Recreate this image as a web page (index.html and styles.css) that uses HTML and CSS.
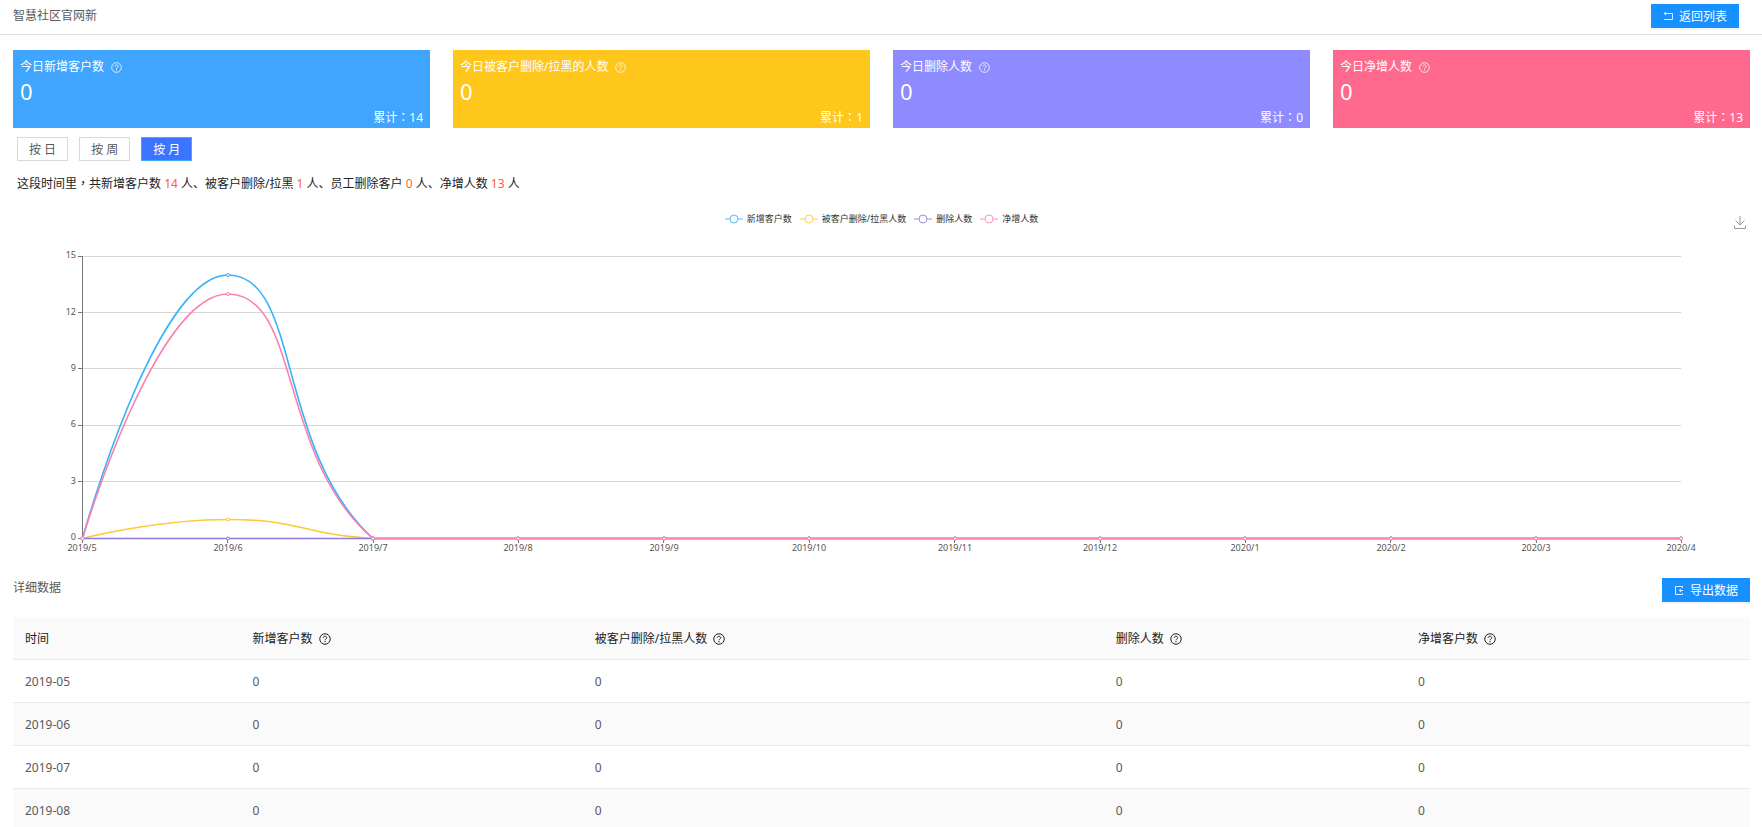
FILE: index.html
```
<!DOCTYPE html>
<html lang="zh-CN">
<head>
    <meta charset="UTF-8">
    <meta name="viewport" content="width=device-width, initial-scale=1.0">
    <title>智慧社区官网新</title>
    <link rel="stylesheet" href="styles.css">
</head>
<body>
    <!--shared icons-->
    <svg class="sprite" aria-hidden="true">
        <symbol id="icon-help" viewBox="0 0 24 24">
            <circle cx="12" cy="12" r="10.5" fill="none" stroke="currentColor" stroke-width="2"/>
            <path d="M8.5 9.8c0-2 1.5-3.3 3.5-3.3s3.5 1.3 3.5 3.1c0 2.2-3.5 2.5-3.5 5" fill="none" stroke="currentColor" stroke-width="2"/>
            <circle cx="12" cy="17.3" r="1.3" fill="currentColor"/>
        </symbol>
    </svg>

    <header class="page-header">
        <h1 class="page-title">智慧社区官网新</h1>
        <button type="button" class="btn-primary">
            <svg class="btn-icon" viewBox="0 0 12 12" fill="none" stroke="currentColor"><path d="M3 3.5h7.5v6H2"/><path d="M4 1.5v4L1.5 3.5z" fill="currentColor" stroke="none"/></svg>
            返回列表
        </button>
    </header>

    <main class="content">
        <!--today cards-->
        <section class="cards">
            <div class="card card-blue">
                <p class="card-label">今日新增客户数 <svg class="card-help"><use href="#icon-help"/></svg></p>
                <p class="card-value">0</p>
                <p class="card-total">累计<span lang="zh-TW">：</span>14</p>
            </div>
            <div class="card card-yellow">
                <p class="card-label">今日被客户删除/拉黑的人数 <svg class="card-help"><use href="#icon-help"/></svg></p>
                <p class="card-value">0</p>
                <p class="card-total">累计<span lang="zh-TW">：</span>1</p>
            </div>
            <div class="card card-purple">
                <p class="card-label">今日删除人数 <svg class="card-help"><use href="#icon-help"/></svg></p>
                <p class="card-value">0</p>
                <p class="card-total">累计<span lang="zh-TW">：</span>0</p>
            </div>
            <div class="card card-pink">
                <p class="card-label">今日净增人数 <svg class="card-help"><use href="#icon-help"/></svg></p>
                <p class="card-value">0</p>
                <p class="card-total">累计<span lang="zh-TW">：</span>13</p>
            </div>
        </section>

        <!--period-->
        <div class="periods">
            <button type="button" class="period">按 日</button>
            <button type="button" class="period">按 周</button>
            <button type="button" class="period active">按 月</button>
        </div>
        <p class="summary">这段时间里<span lang="zh-TW">，</span>共新增客户数 <em>14</em> 人、被客户删除/拉黑 <em>1</em> 人、员工删除客户 <em>0</em> 人、净增人数 <em>13</em> 人</p>

        <!--chart-->
        <section class="chart">
            <div class="chart-head">
                <ul class="legend">
                    <li class="legend-item blue"><svg class="legend-icon" viewBox="0 0 18 10"><path d="M0 5h18"/><circle cx="9" cy="5" r="4"/></svg>新增客户数</li>
                    <li class="legend-item yellow"><svg class="legend-icon" viewBox="0 0 18 10"><path d="M0 5h18"/><circle cx="9" cy="5" r="4"/></svg>被客户删除/拉黑人数</li>
                    <li class="legend-item purple"><svg class="legend-icon" viewBox="0 0 18 10"><path d="M0 5h18"/><circle cx="9" cy="5" r="4"/></svg>删除人数</li>
                    <li class="legend-item pink"><svg class="legend-icon" viewBox="0 0 18 10"><path d="M0 5h18"/><circle cx="9" cy="5" r="4"/></svg>净增人数</li>
                </ul>
                <button type="button" class="download" aria-label="保存为图片">
                    <svg viewBox="0 0 12 13" fill="none" stroke="currentColor"><path d="M6 0v9M1.5 4.5L6 9l4.5-4.5M.5 9.5v3h11v-3"/></svg>
                </button>
            </div>
            <svg class="plot" viewBox="0 0 1737 320">
                <defs>
                    <marker id="dot-blue" class="dot blue" viewBox="-3 -3 6 6" markerWidth="6" markerHeight="6" markerUnits="userSpaceOnUse"><circle r="1.5"/></marker>
                    <marker id="dot-yellow" class="dot yellow" viewBox="-3 -3 6 6" markerWidth="6" markerHeight="6" markerUnits="userSpaceOnUse"><circle r="1.5"/></marker>
                    <marker id="dot-purple" class="dot purple" viewBox="-3 -3 6 6" markerWidth="6" markerHeight="6" markerUnits="userSpaceOnUse"><circle r="1.5"/></marker>
                    <marker id="dot-pink" class="dot pink" viewBox="-3 -3 6 6" markerWidth="6" markerHeight="6" markerUnits="userSpaceOnUse"><circle r="1.5"/></marker>
                </defs>
                <path class="grid" d="M69 15.5H1668M69 71.5H1668M69 127.5H1668M69 184.5H1668M69 240.5H1668"/>
                <path class="axis" d="M69.5 15V297.5H1668M65 15.5h4M65 71.5h4M65 127.5h4M65 184.5h4M65 240.5h4M65 297.5h4"/>
                <path class="axis" d="M69.5 297v5M214.5 297v5M360.5 297v5M505.5 297v5M650.5 297v5M796.5 297v5M941.5 297v5M1087.5 297v5M1232.5 297v5M1377.5 297v5M1523.5 297v5M1668.5 297v5"/>
                <g class="axis-text axis-y">
                    <text x="63" y="17">15</text>
                    <text x="63" y="74">12</text>
                    <text x="63" y="130">9</text>
                    <text x="63" y="186">6</text>
                    <text x="63" y="243">3</text>
                    <text x="63" y="299">0</text>
                </g>
                <g class="axis-text axis-x">
                    <text x="69" y="310">2019/5</text>
                    <text x="215" y="310">2019/6</text>
                    <text x="360" y="310">2019/7</text>
                    <text x="505" y="310">2019/8</text>
                    <text x="651" y="310">2019/9</text>
                    <text x="796" y="310">2019/10</text>
                    <text x="942" y="310">2019/11</text>
                    <text x="1087" y="310">2019/12</text>
                    <text x="1232" y="310">2020/1</text>
                    <text x="1378" y="310">2020/2</text>
                    <text x="1523" y="310">2020/3</text>
                    <text x="1668" y="310">2020/4</text>
                </g>
                <path class="line blue" d="M69.5 297.5C69.5 297.5 142 34 215 34C288 34 262 208 360 297.5L505 297.5L651 297.5L796 297.5L942 297.5L1087 297.5L1232 297.5L1378 297.5L1523 297.5L1668 297.5"/>
                <path class="line yellow" d="M69.5 297.5C69.5 297.5 142 278.5 215 278.5C288 278.5 287 293 360 297.5L505 297.5L651 297.5L796 297.5L942 297.5L1087 297.5L1232 297.5L1378 297.5L1523 297.5L1668 297.5"/>
                <path class="line purple" d="M69.5 297.5L215 297.5L360 297.5L505 297.5L651 297.5L796 297.5L942 297.5L1087 297.5L1232 297.5L1378 297.5L1523 297.5L1668 297.5"/>
                <path class="line pink" d="M69.5 297.5C69.5 297.5 142 53 215 53C288 53 264 216 360 297.5L505 297.5L651 297.5L796 297.5L942 297.5L1087 297.5L1232 297.5L1378 297.5L1523 297.5L1668 297.5"/>
            </svg>
        </section>

        <!--detail table-->
        <div class="detail-head">
            <h2 class="detail-title">详细数据</h2>
            <button type="button" class="btn-primary">
                <svg class="btn-icon" viewBox="0 0 12 12" fill="none" stroke="currentColor"><path d="M9.5 4V2.5h-7v8h7V9M6 6.5h4"/><path d="M8 4.5v4l-2-2z" fill="currentColor" stroke="none"/></svg>
                导出数据
            </button>
        </div>
        <table class="detail">
            <colgroup>
                <col class="col-time">
                <col class="col-new">
                <col class="col-blocked">
                <col class="col-deleted">
                <col>
            </colgroup>
            <thead>
                <tr>
                    <th>时间</th>
                    <th>新增客户数 <svg class="th-help"><use href="#icon-help"/></svg></th>
                    <th>被客户删除/拉黑人数 <svg class="th-help"><use href="#icon-help"/></svg></th>
                    <th>删除人数 <svg class="th-help"><use href="#icon-help"/></svg></th>
                    <th>净增客户数 <svg class="th-help"><use href="#icon-help"/></svg></th>
                </tr>
            </thead>
            <tbody>
                <tr><td>2019-05</td><td>0</td><td>0</td><td>0</td><td>0</td></tr>
                <tr><td>2019-06</td><td>0</td><td>0</td><td>0</td><td>0</td></tr>
                <tr><td>2019-07</td><td>0</td><td>0</td><td>0</td><td>0</td></tr>
                <tr><td>2019-08</td><td>0</td><td>0</td><td>0</td><td>0</td></tr>
            </tbody>
        </table>
    </main>
</body>
</html>
```

FILE: styles.css
```
* {
    box-sizing: border-box;
}
body {
    margin: 0;
    height: 100vh;
    overflow: hidden;
    background-color: #fff;
    font-family: "Noto Sans", "Noto Sans CJK SC", sans-serif;
    font-size: 12px;
    line-height: 18px;
    color: #595959;
}
h1, h2, p, ul {
    margin: 0;
    padding: 0;
}
button {
    font-family: inherit;
    font-size: 12px;
    cursor: pointer;
}
/* centred full-width punctuation */
[lang="zh-TW"] {
    font-family: "Noto Sans CJK TC", sans-serif;
    line-height: 1;
}
.sprite {
    position: absolute;
    width: 0;
    height: 0;
}

/* header */
.page-header {
    display: flex;
    justify-content: space-between;
    align-items: center;
    padding: 4px 23px 6px 13px;
    border-bottom: 1px solid #e0e0e0;
}
.page-title, .detail-title {
    font-size: 12px;
    font-weight: normal;
    line-height: 20px;
}
.btn-primary {
    display: flex;
    align-items: center;
    gap: 5px;
    height: 24px;
    padding: 0 11px 1px 10px;
    border: 1px solid #1890ff;
    background-color: #1890ff;
    box-shadow: 0 2px 0 rgba(0, 0, 0, 0.04);
    color: #fff;
}
.btn-icon {
    width: 12px;
    height: 12px;
    opacity: 0.85;
}
.content {
    padding: 15px 12px 0 13px;
}

/* cards */
.cards {
    display: grid;
    grid-template-columns: repeat(4, 1fr);
    gap: 23px;
}
.card {
    padding: 8px 7px 1px;
    color: #fff;
}
.card-blue {
    background-color: #40a5ff;
}
.card-yellow {
    background-color: #ffc61c;
}
.card-purple {
    background-color: #8e8aff;
}
.card-pink {
    background-color: #ff698d;
}
.card-label {
    display: flex;
    align-items: center;
    gap: 7px;
}
.card-help {
    width: 11px;
    height: 11px;
    opacity: 0.9;
}
.card-value {
    padding-bottom: 2px;
    font-size: 22px;
    line-height: 31px;
}
.card-total {
    text-align: right;
}

/* period */
.periods {
    display: flex;
    gap: 11px;
    padding: 9px 4px 0;
}
.period {
    height: 24px;
    padding: 0 11px;
    border: 1px solid #d9d9d9;
    background-color: #fff;
    color: #595959;
}
.period.active {
    border-color: #40a9ff;
    background-color: #3b74ff;
    color: #fff;
}
.summary {
    padding: 14px 4px 0;
    color: #222;
}
.summary em {
    font-style: normal;
    color: #ff5b3d;
}

/* chart */
.blue {
    --series: #36b3fa;
}
.yellow {
    --series: #ffc933;
}
.purple {
    --series: #9377e0;
}
.pink {
    --series: #fa80b0;
}
.chart-head {
    position: relative;
    padding: 19px 0 15px;
}
.legend {
    display: flex;
    justify-content: center;
    gap: 8px;
    list-style: none;
    font-size: 9px;
    line-height: 14px;
    color: #333;
}
.legend-item {
    display: flex;
    align-items: center;
    gap: 4px;
}
.legend-icon {
    width: 18px;
    height: 10px;
    fill: #fff;
    stroke: var(--series);
    opacity: 0.85;
}
.download {
    position: absolute;
    top: 23px;
    right: 4px;
    width: 12px;
    height: 13px;
    padding: 0;
    border: none;
    background: none;
    color: #999;
}
.download svg {
    display: block;
}
.plot {
    display: block;
    width: 100%;
}
.grid {
    stroke: #d6d6d6;
}
.axis {
    fill: none;
    stroke: #777;
}
.axis-text {
    font-size: 9px;
    fill: #555;
}
.axis-y {
    text-anchor: end;
}
.axis-x {
    text-anchor: middle;
}
.line {
    fill: none;
    stroke: var(--series);
    stroke-width: 1.6;
}
.line.blue {
    marker: url(#dot-blue);
}
.line.yellow {
    marker: url(#dot-yellow);
}
.line.purple {
    marker: url(#dot-purple);
}
.line.pink {
    marker: url(#dot-pink);
}
.dot circle {
    fill: #fff;
    stroke: var(--series);
    stroke-width: 1;
}

/* detail table */
.detail-head {
    display: flex;
    justify-content: space-between;
    align-items: flex-start;
    padding: 17px 0 15px;
}
.detail {
    width: 100%;
    table-layout: fixed;
    border-collapse: separate;
    border-spacing: 0;
}
.col-time {
    width: 13.1%;
}
.col-new {
    width: 19.7%;
}
.col-blocked {
    width: 30%;
}
.col-deleted {
    width: 17.4%;
}
.detail th, .detail td {
    padding: 13px 12px 11px;
    border-bottom: 1px solid #e8e8e8;
    text-align: left;
}
.detail th {
    background-color: #fafafa;
    font-weight: normal;
    color: #222;
}
.detail th:first-child {
    border-top-left-radius: 2px;
}
.detail th:last-child {
    border-top-right-radius: 2px;
}
.detail tbody tr:nth-child(even) {
    background-color: #fafafa;
}
.th-help {
    width: 12px;
    height: 12px;
    margin-left: 3px;
    vertical-align: -2px;
}
```
